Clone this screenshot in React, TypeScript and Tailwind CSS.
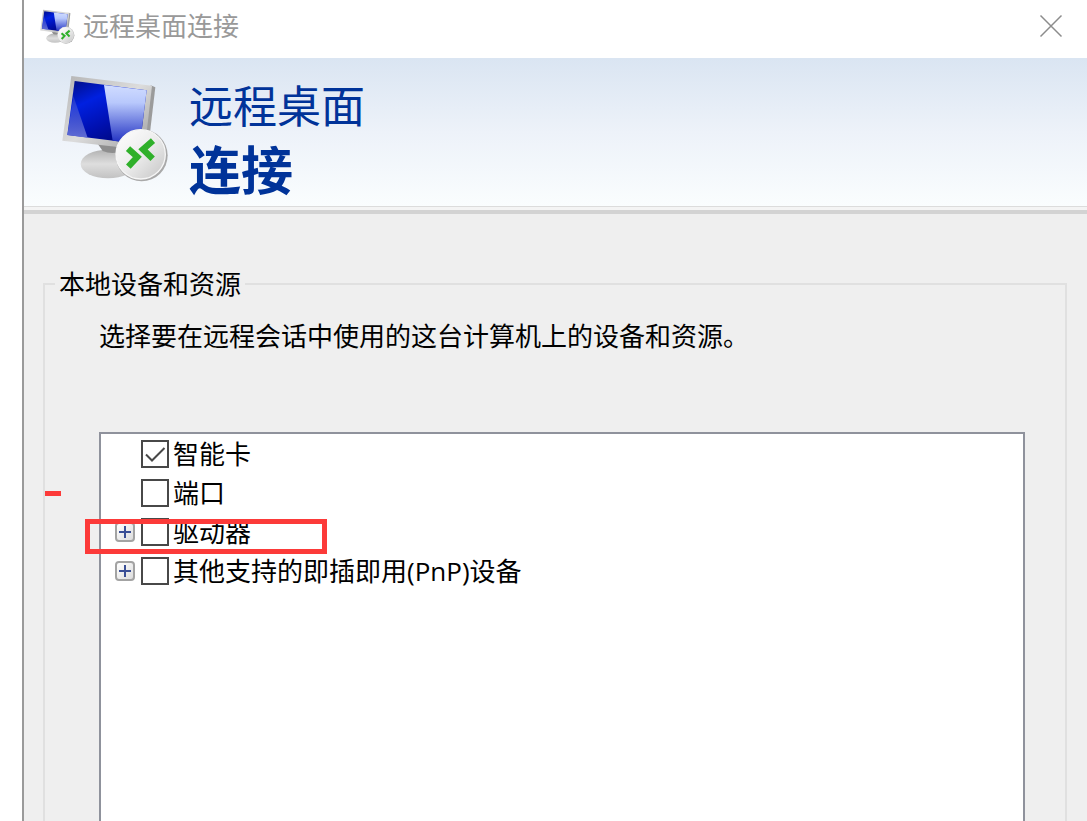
import { useState } from "react";

const devices = [
  { id: "smartcard", label: "智能卡", checked: true, expandable: false },
  { id: "ports", label: "端口", checked: false, expandable: false },
  { id: "drives", label: "驱动器", checked: false, expandable: true },
  { id: "pnp", label: "其他支持的即插即用(PnP)设备", checked: false, expandable: true },
];

const RemoteIcon = ({ id, className }: { id: string; className: string }) => (
  <svg className={className} viewBox="36 42 321 324" aria-hidden="true">
    <defs>
      <linearGradient id={`${id}-screen`} x1="0" y1="0" x2="0.6" y2="1">
        <stop offset="0" stopColor="#000c80" />
        <stop offset="0.35" stopColor="#0020e0" />
        <stop offset="0.7" stopColor="#0010b0" />
        <stop offset="1" stopColor="#000880" />
      </linearGradient>
      <linearGradient id={`${id}-shine`} x1="0" y1="0" x2="0" y2="1">
        <stop offset="0" stopColor="#d0dcff" />
        <stop offset="0.3" stopColor="#b8c8fc" />
        <stop offset="1" stopColor="#1c2cc0" />
      </linearGradient>
      <linearGradient id={`${id}-glint`} x1="0" y1="0" x2="0" y2="1">
        <stop offset="0" stopColor="#4a5ad0" stopOpacity="0.4" />
        <stop offset="1" stopColor="#6a76d8" stopOpacity="0.9" />
      </linearGradient>
      <linearGradient id={`${id}-frame`} x1="0" y1="0" x2="1" y2="1">
        <stop offset="0" stopColor="#b4b4b4" />
        <stop offset="0.5" stopColor="#dcdcdc" />
        <stop offset="1" stopColor="#9c9c9c" />
      </linearGradient>
      <linearGradient id={`${id}-base`} x1="0" y1="0" x2="0" y2="1">
        <stop offset="0" stopColor="#b2b2b2" />
        <stop offset="0.5" stopColor="#dedede" />
        <stop offset="1" stopColor="#c2c2c2" />
      </linearGradient>
      <linearGradient id={`${id}-badge`} x1="0" y1="0" x2="1" y2="1">
        <stop offset="0" stopColor="#ffffff" />
        <stop offset="0.5" stopColor="#ececec" />
        <stop offset="1" stopColor="#c4c4c4" />
      </linearGradient>
    </defs>
    <ellipse cx="174" cy="312" rx="82" ry="43" fill={`url(#${id}-base)`} />
    <path d="M142 250 L218 262 L205 277 Q180 282 158 273 Z" fill="#8e8e8e" />
    <path d="M302 76 L316 82 L298 235 L284 230 Z" fill="#9b9b9b" />
    <path d="M64 48 L306 77 L284 270 L37 242 Z" fill={`url(#${id}-frame)`} />
    <path d="M74 63 L290 91 L270 252 L52 225 Z" fill={`url(#${id}-screen)`} />
    <path d="M162 75 L290 91 L270 252 L188 242 Z" fill={`url(#${id}-shine)`} />
    <path d="M70 108 L113 233 L52 225 Z" fill={`url(#${id}-glint)`} />
    <circle cx="275" cy="286" r="78" fill="#a9a9a9" />
    <circle cx="272" cy="283" r="74" fill={`url(#${id}-badge)`} stroke="#f6f6f6" strokeWidth="4" />
    <path d="M234 266 L262 291 L235 320" fill="none" stroke="#2fb02a" strokeWidth="19" />
    <path d="M309 242 L279 268 L308 296" fill="none" stroke="#2fb02a" strokeWidth="19" />
  </svg>
);

const App = () => {
  const [checked, setChecked] = useState<Record<string, boolean>>(
    Object.fromEntries(devices.map((d) => [d.id, d.checked]))
  );

  const toggle = (id: string) => {
    setChecked({ ...checked, [id]: !checked[id] });
  };

  return (
    <div className="flex min-h-screen bg-white pl-[22px] font-['Open_Sans','Noto_Sans_CJK_SC',sans-serif] text-[26px] leading-9 text-black">
      <div className="flex flex-1 flex-col border-l-2 border-[#9a9a9a] bg-[#efefef]">
        {/* Title bar */}
        <header className="flex h-[58px] items-start justify-between bg-white pl-4 pr-6 pt-2">
          <div className="flex items-center gap-2 text-[#999999]">
            <RemoteIcon id="small" className="h-[35px] w-[35px]" />
            <span>远程桌面连接</span>
          </div>
          <button aria-label="关闭" className="flex h-9 items-center">
            <svg className="h-6 w-6" viewBox="0 0 24 24" fill="none" stroke="#8c8c8c" strokeWidth="1.5">
              <path d="M1.5 1.5 L22.5 22.5 M22.5 1.5 L1.5 22.5" />
            </svg>
          </button>
        </header>

        {/* Banner */}
        <div className="flex h-[148px] gap-5 bg-linear-to-b from-[#dae5f2] via-[#edf2f9] to-[#fafdfe] pl-[38px] pt-4">
          <RemoteIcon id="large" className="h-[108px] w-[107px]" />
          <h1 className="text-[#003399]">
            <span className="block text-[44px] leading-[64px]">远程桌面</span>
            <span className="block text-[52px] font-bold leading-[64px]">连接</span>
          </h1>
        </div>
        <div className="h-2 border-b-4 border-t border-b-[#d3d3d3] border-t-[#dcdcdc] bg-[#f4f4f4]" />

        {/* Devices and resources */}
        <main className="flex flex-1 flex-col pl-[19px] pr-5 pt-[52px]">
          <fieldset className="flex min-w-0 flex-1 flex-col border-2 border-b-0 border-[#e0e0e0] pl-[54px] pr-10">
            <legend className="-ml-11 px-1">本地设备和资源</legend>
            <p className="mt-4">选择要在远程会话中使用的这台计算机上的设备和资源。</p>
            <ul className="mt-[78px] flex-1 border-2 border-b-0 border-[#8f929c] bg-white">
              {devices.map((device) => (
                <li key={device.id} className="relative flex h-[39px] items-center pl-[14px]">
                  <div className="w-[26px]">
                    {device.expandable && (
                      <button
                        aria-label={`展开 ${device.label}`}
                        className="flex h-5 w-5 items-center justify-center rounded-sm border-2 border-[#a3a3a3] bg-linear-to-br from-white to-[#dddddd]"
                      >
                        <svg className="h-3 w-3" viewBox="0 0 12 12" stroke="#3a4f96" strokeWidth="2">
                          <path d="M6 0 V12 M0 6 H12" />
                        </svg>
                      </button>
                    )}
                  </div>
                  <label className="flex items-center gap-1">
                    <span className="grid h-7 w-7">
                      <input
                        type="checkbox"
                        checked={checked[device.id]}
                        onChange={() => toggle(device.id)}
                        className="peer col-start-1 row-start-1 h-7 w-7 appearance-none border-2 border-[#484848] bg-white"
                      />
                      <svg
                        className="pointer-events-none invisible col-start-1 row-start-1 h-7 w-7 peer-checked:visible"
                        viewBox="0 0 28 28"
                        fill="none"
                        stroke="#484848"
                        strokeWidth="2"
                      >
                        <path d="M5 14.5 L11 20.5 L23.5 8" />
                      </svg>
                    </span>
                    {device.label}
                  </label>
                  {/* Red markers drawn over the list */}
                  {device.id === "ports" && (
                    <span className="absolute -left-14 top-[18px] h-[5px] w-4 bg-[#fc3a39]" />
                  )}
                  {device.id === "drives" && (
                    <span className="pointer-events-none absolute -left-4 top-[7px] h-[35px] w-[242px] border-[5px] border-[#fc3a39]" />
                  )}
                </li>
              ))}
            </ul>
          </fieldset>
        </main>
      </div>
    </div>
  );
};

export default App;
